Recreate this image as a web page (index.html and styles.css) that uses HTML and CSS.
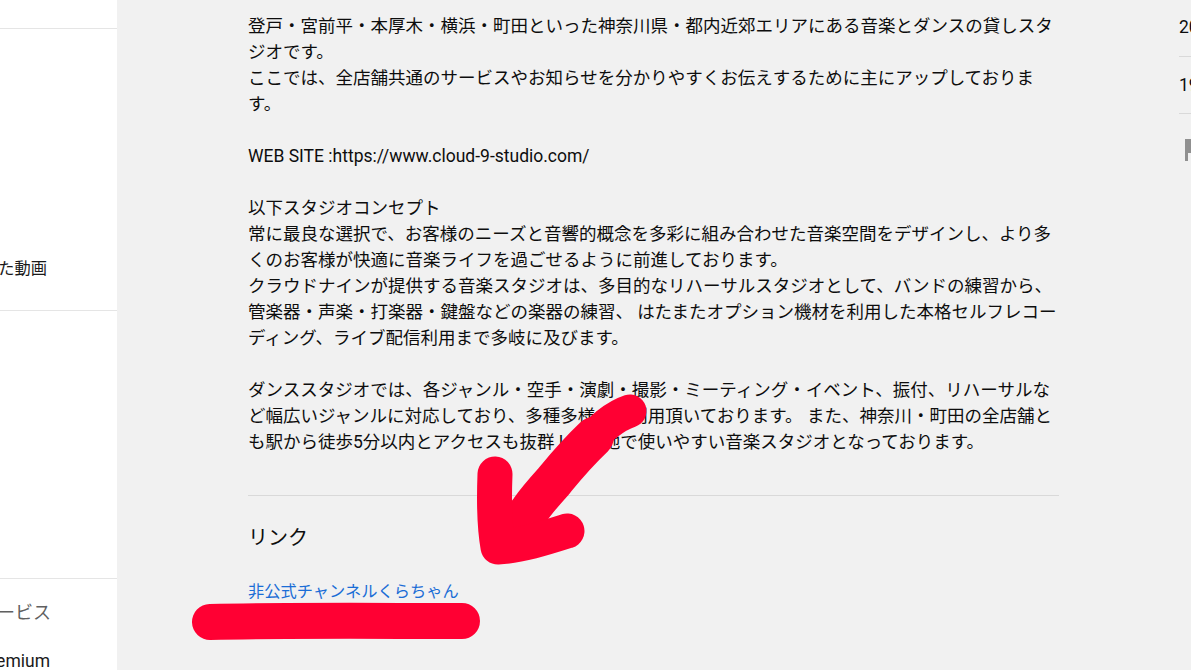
FILE: index.html
```html
<!DOCTYPE html>
<html lang="ja">
<head>
<meta charset="utf-8">
<title>チャンネル概要</title>
<link rel="stylesheet" href="styles.css">
</head>
<body>
<div class="page">
  <aside class="sidebar">
    <section class="side-section side-top"></section>
    <section class="side-section side-library">
      <div class="side-item">高く評価した動画</div>
    </section>
    <section class="side-section side-subs"></section>
    <section class="side-more">
      <div class="side-title">YouTube の他のサービス</div>
      <div class="side-item side-premium">YouTube Premium</div>
    </section>
  </aside>
  <main class="about">
    <p class="description">登戸・宮前平・本厚木・横浜・町田といった神奈川県・都内近郊エリアにある音楽とダンスの貸しスタ<br>ジオです。<br>ここでは、全店舗共通のサービスやお知らせを分かりやすくお伝えするために主にアップしておりま<br>す。<br><br>WEB SITE :https://www.cloud-9-studio.com/<br><br>以下スタジオコンセプト<br>常に最良な選択で、お客様のニーズと音響的概念を多彩に組み合わせた音楽空間をデザインし、より多<br>くのお客様が快適に音楽ライフを過ごせるように前進しております。<br>クラウドナインが提供する音楽スタジオは、多目的なリハーサルスタジオとして、バンドの練習から、<br>管楽器・声楽・打楽器・鍵盤などの楽器の練習、 はたまたオプション機材を利用した本格セルフレコー<br>ディング、ライブ配信利用まで多岐に及びます。<br><br>ダンススタジオでは、各ジャンル・空手・演劇・撮影・ミーティング・イベント、振付、リハーサルな<br>ど幅広いジャンルに対応しており、多種多様なご利用頂いております。 また、神奈川・町田の全店舗と<br>も駅から徒歩5分以内とアクセスも抜群 ! 好立地で使いやすい音楽スタジオとなっております。</p>
    <div class="links">
      <h2 class="links-title">リンク</h2>
      <a class="link" href="#">非公式チャンネルくらちゃん</a>
    </div>
  </main>
  <aside class="stats">
    <div class="stat">2019</div>
    <div class="stat stat-views">1983</div>
    <svg class="flag" width="12" height="22" viewBox="0 0 12 22" aria-hidden="true"><path d="M0 0H12V14H3V22H0Z" fill="#909090"/></svg>
  </aside>
</div>
<svg class="scribble" width="1191" height="670" viewBox="0 0 1191 670" aria-hidden="true">
  <path class="stroke stroke-tail" d="M630 411C612 417 599 431 587 443"/>
  <path class="stroke stroke-shaft" d="M594 437C574 456 563 470 554 481C545 491 537 500 530 510C524 518 518 526 511 533"/>
  <path class="stroke stroke-head" d="M495 474C494 500 494 525 498 547C520 546 545 538 567 531"/>
  <path class="stroke" d="M210 622C290 620 380 621 462 621"/>
</svg>
</body>
</html>
```

FILE: styles.css
```css
* {
  box-sizing: border-box;
}

html,
body {
  margin: 0;
  height: 100%;
  overflow: hidden;
}

body {
  position: relative;
  background: #f1f1f1;
  color: #0d0d0d;
  font-family: Roboto, "Noto Sans CJK JP", sans-serif;
  font-size: 17.5px;
}

.page {
  display: flex;
  height: 670px;
}

.sidebar {
  flex: 0 0 117px;
  width: 117px;
  background: #fff;
  overflow: hidden;
}

.side-section {
  border-bottom: 1px solid #e5e5e5;
}

.side-top {
  height: 29px;
}

.side-library {
  display: flex;
  flex-direction: column;
  justify-content: flex-end;
  height: 282px;
  padding-bottom: 29px;
}

.side-subs {
  height: 268px;
}

.side-item,
.side-title {
  display: flex;
  justify-content: flex-end;
  padding-right: 70px;
  white-space: nowrap;
}

.side-item {
  font-size: 16.25px;
  line-height: 24px;
  color: #1a1a1a;
}

.side-title {
  margin-top: 21px;
  padding-right: 66px;
  font-size: 18px;
  line-height: 26px;
  color: #606060;
}

.side-premium {
  margin-top: 23px;
  padding-right: 67px;
  font-size: 17.5px;
}

.about {
  flex: 0 0 942px;
  padding: 13px 0 0 131px;
}

.description {
  margin: 0;
  font-size: 17.5px;
  line-height: 26px;
  white-space: nowrap;
}

.links {
  margin-top: 40px;
  border-top: 1px solid #d9d9d9;
}

.links-title {
  margin: 27px 0 26px;
  font-size: 20px;
  font-weight: 400;
  line-height: 30px;
}

.link {
  display: block;
  font-size: 16.25px;
  line-height: 26px;
  color: #1a6dd6;
  text-decoration: none;
}

.stats {
  flex: 1 1 auto;
  padding-left: 120px;
  min-width: 0;
}

.stat {
  height: 57px;
  padding-top: 14px;
  font-size: 17.5px;
  line-height: 26px;
  border-bottom: 1px solid #d9d9d9;
  white-space: nowrap;
  overflow: hidden;
}

.stat-views {
  padding-top: 15px;
}

.flag {
  display: block;
  margin: 25px 0 0 6px;
}

.scribble {
  position: absolute;
  top: 0;
  left: 0;
  pointer-events: none;
}

.stroke {
  fill: none;
  stroke: #ff0033;
  stroke-width: 36;
  stroke-linecap: round;
  stroke-linejoin: round;
}

.stroke-tail {
  stroke-width: 33;
}

.stroke-shaft {
  stroke-width: 40;
}

.stroke-head {
  stroke-width: 35;
}
```
